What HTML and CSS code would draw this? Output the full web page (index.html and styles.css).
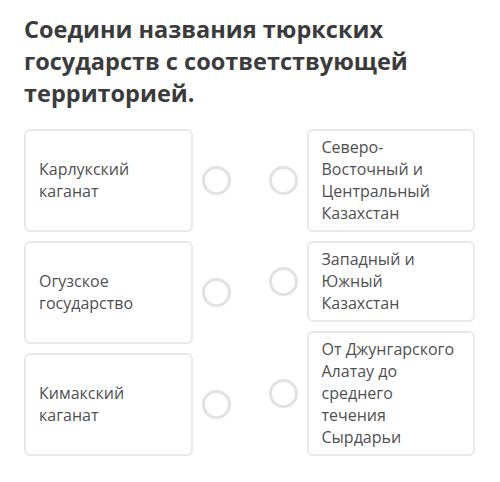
FILE: index.html
```html
<!DOCTYPE html>
<html lang="ru">
<head>
    <meta charset="UTF-8">
    <title>Соедини</title>
    <link rel="stylesheet" href="styles.css">
</head>
<body>
    <h1 class="question">Соедини названия тюркских государств с соответствующей территорией.</h1>

    <div class="match">
        <div class="col col-left">
            <div class="pair">
                <div class="card card-center">Карлукский каганат</div>
                <span class="dot"></span>
            </div>
            <div class="pair">
                <div class="card card-center">Огузское государство</div>
                <span class="dot"></span>
            </div>
            <div class="pair">
                <div class="card card-center">Кимакский каганат</div>
                <span class="dot"></span>
            </div>
        </div>

        <div class="col col-right">
            <div class="pair">
                <span class="dot"></span>
                <div class="card">Северо-Восточный и Центральный Казахстан</div>
            </div>
            <div class="pair">
                <span class="dot"></span>
                <div class="card">Западный и Южный Казахстан</div>
            </div>
            <div class="pair">
                <span class="dot"></span>
                <div class="card">От Джунгарского Алатау до среднего течения Сырдарьи</div>
            </div>
        </div>
    </div>
</body>
</html>
```

FILE: styles.css
```css
body { margin: 0; padding: 13px 25px 0 24px; background: #fff; font-family: "Open Sans", "Liberation Sans", sans-serif; }
.question { margin: 0 0 20px; font-size: 23.5px; line-height: 32px; font-weight: 700; color: #3b3b3d; }
.match { display: flex; gap: 38px; }
.col { display: flex; flex-direction: column; gap: 9px; flex: 1; }
.pair { display: flex; align-items: center; gap: 9px; }
.col-left .pair { flex: 1; align-items: stretch; }
.col-left .dot { align-self: center; }
.card { flex: 1; box-sizing: border-box; width: 168px; border: 2px solid #e8e8e8; border-radius: 6px; background: #fff; padding: 5px 13px 6px; font-size: 16px; line-height: 22px; color: #505052; }
.card-center { display: flex; align-items: center; }
.dot { flex: none; width: 29px; height: 29px; box-sizing: border-box; border: 3px solid #e2e2e2; border-radius: 50%; }
```
